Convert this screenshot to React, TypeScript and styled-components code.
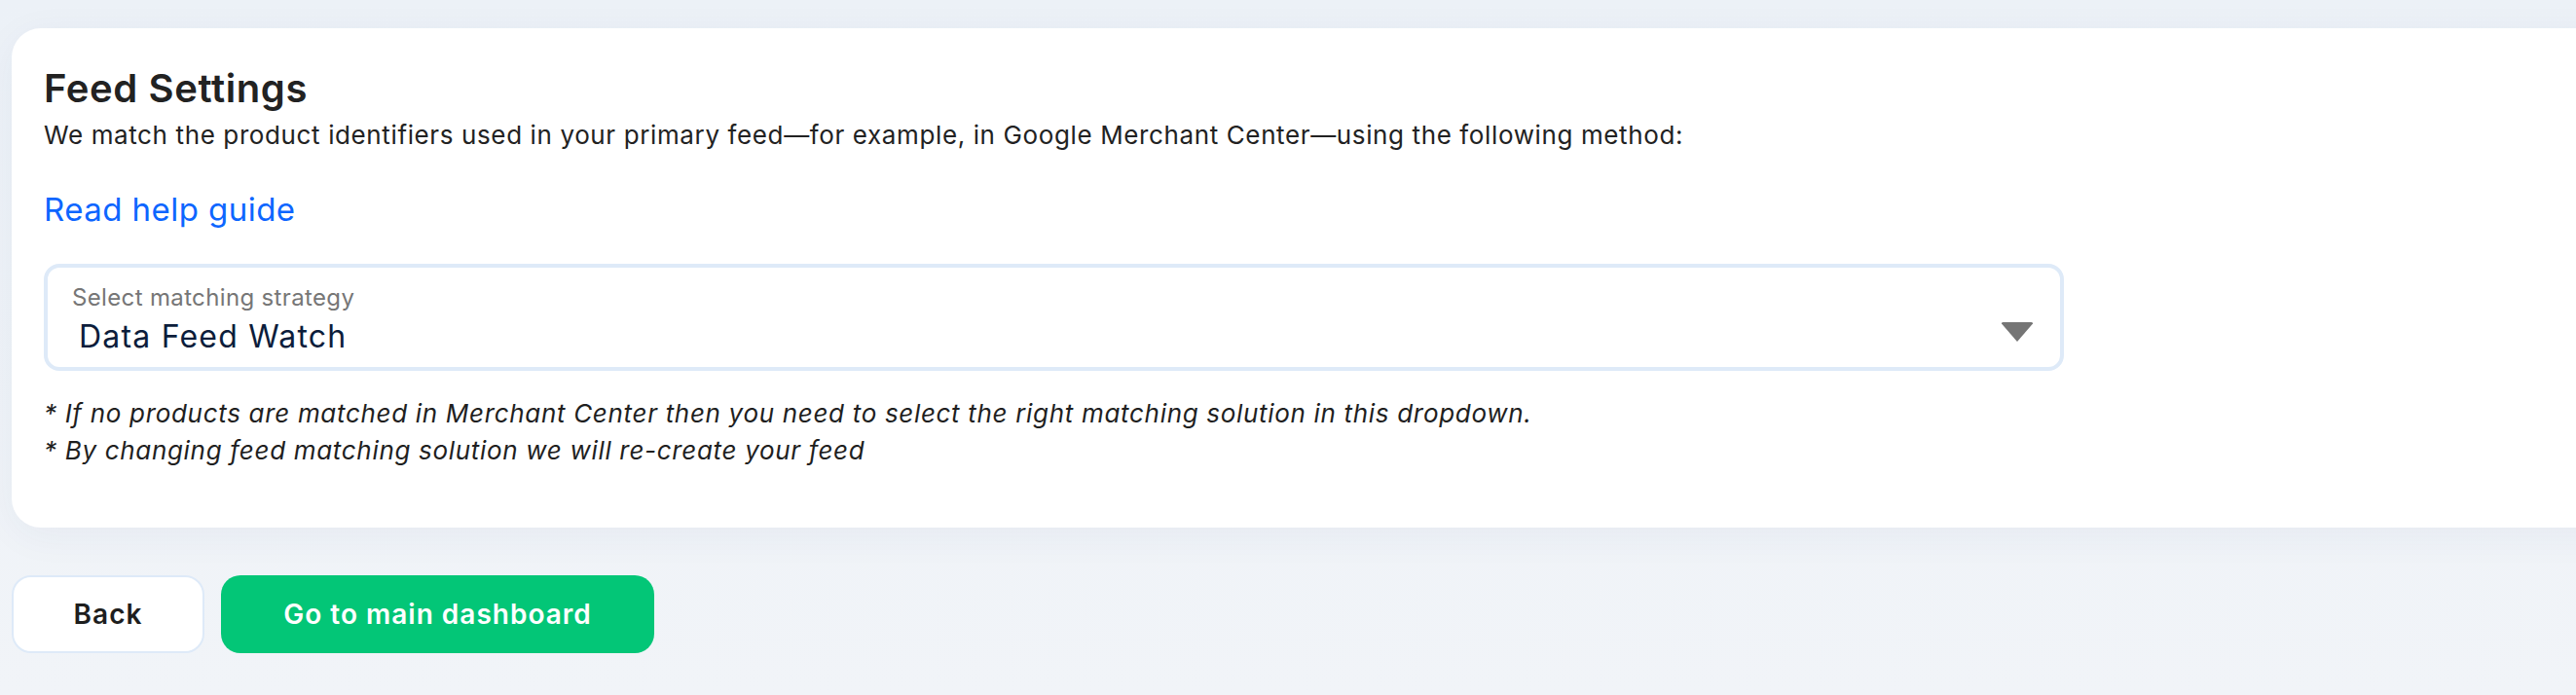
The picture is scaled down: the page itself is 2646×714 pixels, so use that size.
import React from "react";
import styled, { createGlobalStyle } from "styled-components";

const Global = createGlobalStyle`
  html, body {
    margin: 0;
    padding: 0;
    background: #eff3f8;
    overflow: hidden;
  }
  body {
    font-family: Inter, "Open Sans", "Liberation Sans", sans-serif;
    color: #222222;
  }
`;

const Page = styled.main`
  width: 2700px;
  padding: 29px 0 0 12px;
  display: flex;
  flex-direction: column;
  align-items: flex-start;
  box-sizing: border-box;
  min-height: 714px;
  background: linear-gradient(180deg, #ecf1f7 0%, #f1f4f8 100%);
`;

const Card = styled.section`
  width: 2690px;
  box-sizing: border-box;
  background: #ffffff;
  border-radius: 30px;
  padding: 38px 33px 60px 33px;
  box-shadow: 0 8px 40px rgba(30, 60, 110, 0.05);
  display: flex;
  flex-direction: column;
  align-items: flex-start;
`;

const Title = styled.h1`
  margin: 0;
  font-size: 40px;
  line-height: 48px;
  font-weight: 600;
  letter-spacing: 0.6px;
  color: #222222;
`;

const Lead = styled.p`
  margin: 6px 0 0 0;
  font-size: 26px;
  line-height: 36px;
  letter-spacing: 0.62px;
  color: #222222;
`;

const HelpLink = styled.a`
  margin-top: 38px;
  font-size: 33px;
  line-height: 40px;
  letter-spacing: 0.45px;
  color: #0d66ff;
  text-decoration: none;
`;

const Select = styled.div`
  margin-top: 36px;
  width: 2075px;
  height: 110px;
  box-sizing: border-box;
  border: 4px solid #deeaf8;
  border-radius: 16px;
  padding: 16px 27px 0 25px;
  display: flex;
  align-items: flex-start;
  justify-content: space-between;
`;

const SelectText = styled.div`
  display: flex;
  flex-direction: column;
  gap: 5px;
`;

const SelectLabel = styled.span`
  font-size: 24px;
  line-height: 30px;
  letter-spacing: 0.35px;
  color: #767676;
`;

const SelectValue = styled.span`
  padding-left: 7px;
  font-size: 32px;
  line-height: 40px;
  letter-spacing: 1.2px;
  color: #0c1d3b;
`;

const Caret = styled.svg`
  margin-top: 40px;
  width: 34px;
  height: 20px;
  flex: none;
`;

const Notes = styled.div`
  margin-top: 25px;
  display: flex;
  flex-direction: column;
`;

const Note = styled.p`
  margin: 0;
  font-size: 26px;
  line-height: 38px;
  font-style: italic;
  letter-spacing: 0.68px;
  color: #1f1f1f;
`;

const Actions = styled.div`
  margin-top: 49px;
  display: flex;
  gap: 17px;
`;

const Button = styled.button<{ $primary?: boolean; $w: number }>`
  width: ${(p) => p.$w}px;
  height: 80px;
  box-sizing: border-box;
  border-radius: 20px;
  font-family: inherit;
  font-size: 28px;
  font-weight: 600;
  letter-spacing: 1px;
  cursor: pointer;
  display: flex;
  align-items: center;
  justify-content: center;
  border: ${(p) => (p.$primary ? "none" : "2px solid #deeaf8")};
  background: ${(p) => (p.$primary ? "#03c677" : "#ffffff")};
  color: ${(p) => (p.$primary ? "#ffffff" : "#1e1e1e")};
`;

export default function App() {
  return (
    <>
      <Global />
      <Page>
        <Card>
          <Title>Feed Settings</Title>
          <Lead>
            We match the product identifiers used in your primary feed—for example, in Google Merchant Center—using the following method:
          </Lead>
          <HelpLink href="#">Read help guide</HelpLink>
          <Select>
            <SelectText>
              <SelectLabel>Select matching strategy</SelectLabel>
              <SelectValue>Data Feed Watch</SelectValue>
            </SelectText>
            <Caret viewBox="0 0 34 20">
              <path d="M1 1.5 Q0.5 0 2.5 0 L31.5 0 Q33.5 0 33 1.5 L17 20 Z" fill="#757575" />
            </Caret>
          </Select>
          <Notes>
            <Note>* If no products are matched in Merchant Center then you need to select the right matching solution in this dropdown.</Note>
            <Note>* By changing feed matching solution we will re-create your feed</Note>
          </Notes>
        </Card>
        <Actions>
          <Button $w={198}>Back</Button>
          <Button $primary $w={445}>Go to main dashboard</Button>
        </Actions>
      </Page>
    </>
  );
}
